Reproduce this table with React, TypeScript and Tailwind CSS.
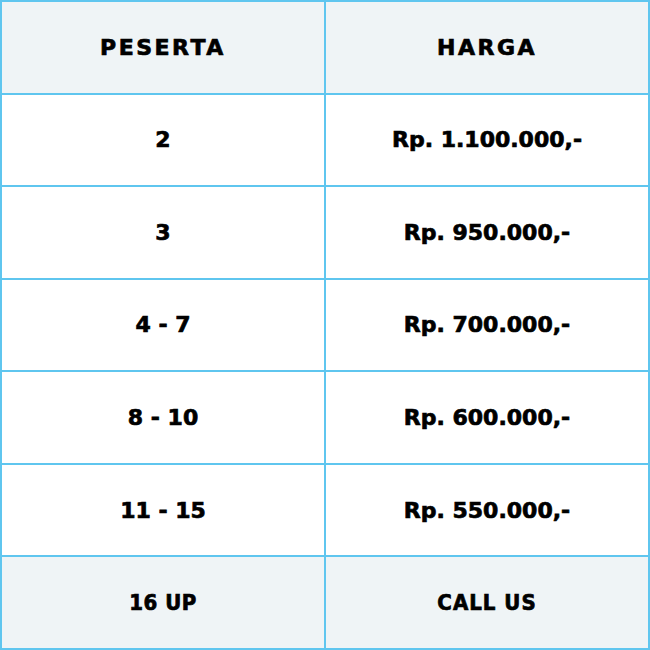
const rows = [
  { peserta: '2', harga: 'Rp. 1.100.000,-' },
  { peserta: '3', harga: 'Rp. 950.000,-' },
  { peserta: '4 - 7', harga: 'Rp. 700.000,-' },
  { peserta: '8 - 10', harga: 'Rp. 600.000,-' },
  { peserta: '11 - 15', harga: 'Rp. 550.000,-' },
];

const font = { fontFamily: '"DejaVu Sans", "Liberation Sans", sans-serif' };
const condensed = { fontFamily: '"DejaVu Sans Condensed", "DejaVu Sans", sans-serif' };

export default function App() {
  return (
    <div
      className="w-[650px] h-[650px] bg-[#5fc6ef] p-[2px] grid grid-cols-2 grid-rows-7 gap-[2px] text-black font-bold [-webkit-text-stroke:0.7px_black]"
      style={font}
    >
      {/* Header */}
      <div className="bg-[#eff4f6] flex items-center justify-center text-[22px] tracking-[2.5px]">PESERTA</div>
      <div className="bg-[#eff4f6] flex items-center justify-center text-[22px] tracking-[2.5px]">HARGA</div>

      {rows.map((r) => (
        <>
          <div key={r.peserta} className="bg-white flex items-center justify-center text-[22px]">
            {r.peserta}
          </div>
          <div key={r.harga} className="bg-white flex items-center justify-center text-[22px]">
            {r.harga}
          </div>
        </>
      ))}

      {/* Footer */}
      <div className="bg-[#eff4f6] flex items-center justify-center text-[22px] tracking-[0.5px]" style={condensed}>16 UP</div>
      <div className="bg-[#eff4f6] flex items-center justify-center text-[22px] tracking-[1px]" style={condensed}>CALL US</div>
    </div>
  );
}
